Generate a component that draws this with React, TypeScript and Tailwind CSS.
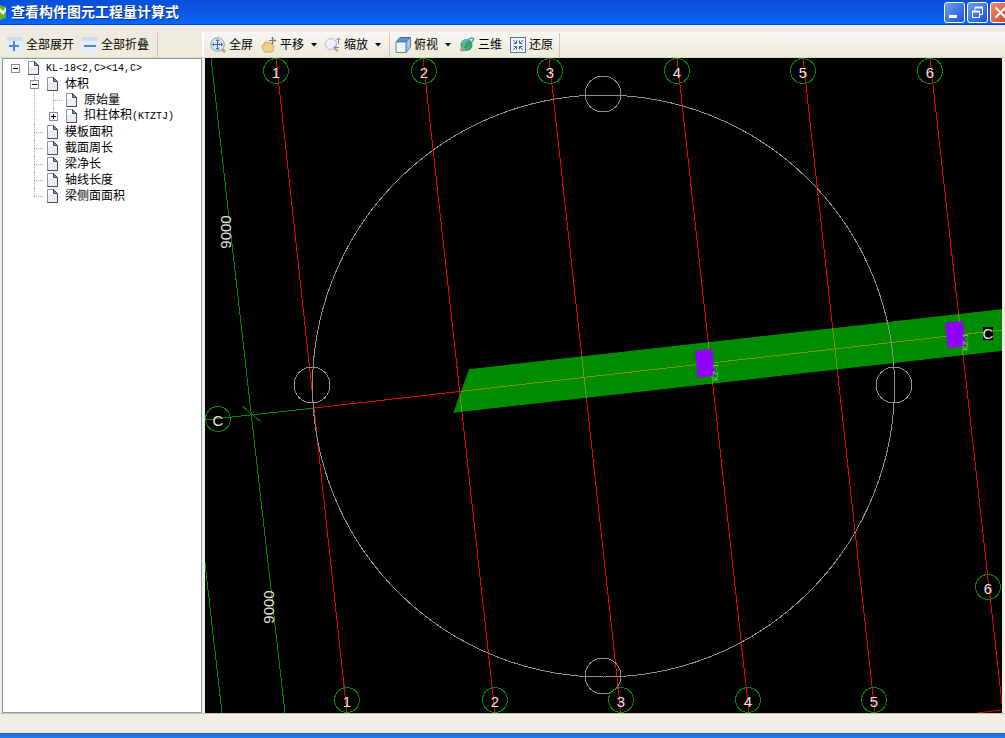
import { useState } from 'react';
import type { ReactNode } from 'react';

interface TreeNode {
  id: string;
  label: string;
  code?: string;
  children?: TreeNode[];
}

interface Point {
  x: number;
  y: number;
  label: string;
}

const TREE: TreeNode = {
  id: 'beam',
  label: '',
  code: 'KL-18<2,C><14,C>',
  children: [
    {
      id: 'volume',
      label: '体积',
      children: [
        { id: 'raw', label: '原始量' },
        { id: 'column', label: '扣柱体积', code: '(KTZTJ)', children: [] },
      ],
    },
    { id: 'formwork', label: '模板面积' },
    { id: 'perimeter', label: '截面周长' },
    { id: 'clear', label: '梁净长' },
    { id: 'axis', label: '轴线长度' },
    { id: 'side', label: '梁侧面面积' },
  ],
};

// grid axes run from the top bubble row down to the bottom one
const AXES = [
  { x1: 276, x2: 347 },
  { x1: 423, x2: 495 },
  { x1: 549, x2: 621 },
  { x1: 677, x2: 749 },
  { x1: 803, x2: 875 },
  { x1: 930, x2: 1003 },
];

const BEAM = '469,369 1002,309 1002,351 453,413';

const BUBBLES: Point[] = [
  { x: 276, y: 71, label: '1' },
  { x: 424, y: 71, label: '2' },
  { x: 550, y: 71, label: '3' },
  { x: 677, y: 71, label: '4' },
  { x: 803, y: 71, label: '5' },
  { x: 930, y: 71, label: '6' },
  { x: 347, y: 700, label: '1' },
  { x: 495, y: 700, label: '2' },
  { x: 621, y: 700, label: '3' },
  { x: 748, y: 700, label: '4' },
  { x: 874, y: 700, label: '5' },
  { x: 988, y: 587, label: '6' },
  { x: 218, y: 419, label: 'C' },
];

const HANDLES = [
  { x: 603, y: 94 },
  { x: 312, y: 385 },
  { x: 894, y: 385 },
  { x: 603, y: 676 },
];

function PageIcon() {
  return (
    <svg className="size-4 shrink-0" viewBox="0 0 16 16">
      <path d="M3.5 1.5h6l4 4v9h-10z" fill="#e9edf8" stroke="#8b95a8" />
      <path d="M4 2h5v5H4z" fill="#fff" />
      <path d="M9.500 1.500v4h4z" fill="#8793b5" stroke="#3e465c" />
      <path d="M13.500 5.500v9h-10" fill="none" stroke="#3e465c" />
    </svg>
  );
}

function PlusIcon({ minus = false }: { minus?: boolean }) {
  return (
    <svg className="size-4" viewBox="0 0 16 16">
      <rect width="16" height="16" fill="#e3edf9" />
      <rect width="16" height="4" fill="#d3daf6" />
      {minus ? (
        <path d="M2 8h12v2H2z" fill="#4b89b8" />
      ) : (
        <path d="M6 4h2v4h4v2H8v4H6v-4H2V8h4z" fill="#4b89b8" />
      )}
    </svg>
  );
}

function FullScreenIcon() {
  return (
    <svg className="size-4" viewBox="0 0 16 16">
      <path d="M12 12l3 3" stroke="#d29a63" strokeWidth="2.500" />
      <circle cx="7.500" cy="7.500" r="6.800" fill="#d6e8f8" stroke="#8a9db5" />
      <path d="M7.500 3v9M3 7.500h9" stroke="#3a6497" />
      <path
        d="M7.500 2l2 2h-4zM7.500 13l2-2h-4zM2 7.500l2-2v4zM13 7.500l-2-2v4z"
        fill="#3a6497"
      />
    </svg>
  );
}

function PanIcon() {
  return (
    <svg className="size-4" viewBox="0 0 16 16">
      <path
        d="M3 15c0-2-2-4-2-6 0-1 1-1 2 0V6c0-1 1-1 2 0 0-2 2-2 2 0 1-1 2-1 2 1 1-1 2 0 2 1l2 1c0 3-1 5-2 6z"
        fill="#f1d18a"
        stroke="#cda564"
      />
      <path d="M11.500 0v7M8 3.500h7" stroke="#6c737b" />
      <path
        d="M11.500 0l1.500 2h-3zM15.500 3.500l-2-1.500v3zM11.500 7.500l1.500-2h-3z"
        fill="#6c737b"
      />
    </svg>
  );
}

function ZoomIcon() {
  return (
    <svg className="size-4" viewBox="0 0 16 16">
      <path d="M9.500 10.500l3 4" stroke="#d7a873" strokeWidth="2.500" />
      <circle cx="6" cy="7" r="5.500" fill="#edf3fb" stroke="#b3bac8" />
      <path d="M13.500 1v6M11.500 3l2-2 2 2M9 10.500h5M11 8.500l-2 2 2 2" fill="none" stroke="#7588a0" />
    </svg>
  );
}

function CubeIcon() {
  return (
    <svg className="size-4" viewBox="0 0 16 16">
      <path d="M1 5l4-4.500h10.500L11 5z" fill="#4f9bcd" stroke="#3c6792" />
      <path d="M11 5l4.500-4.500V10L11 15.500z" fill="#a8c7e4" stroke="#6883a4" />
      <path d="M1 5h10v10.500H1z" fill="#edf3fb" stroke="#6883a4" />
    </svg>
  );
}

function OrbitIcon() {
  return (
    <svg className="size-4" viewBox="0 0 16 16">
      <circle cx="7.500" cy="8" r="6" fill="#2da65b" />
      <path d="M4 4c2-2 4-2 6-1-2 2-4 4-5 7-3-2-2-4-1-6z" fill="#67c5a6" />
      <path d="M12 6c3-3 3-5 1-5C9 1 2 9 2 13c1 2 7-1 9-5" fill="none" stroke="#5c9fc0" strokeWidth="1.500" />
      <path d="M1 14l3-5 2 3z" fill="#d89d5d" />
    </svg>
  );
}

function RestoreIcon() {
  return (
    <svg className="size-4" viewBox="0 0 16 16">
      <rect x=".5" y=".5" width="15" height="15" fill="#f1f6fd" stroke="#5276ae" />
      <path
        d="M3 3l3 3M13 3l-3 3M3 13l3-3M13 13l-3-3M6.500 3.500v3h-3M9.500 3.500v3h3M6.500 12.500v-3h-3M9.500 12.500v-3h3"
        fill="none"
        stroke="#42699f"
      />
    </svg>
  );
}

function ToolButton({ icon, label }: { icon: ReactNode; label: string }) {
  return (
    <button type="button" className="flex shrink-0 items-center gap-[3px] text-xs whitespace-nowrap text-black">
      {icon}
      {label}
    </button>
  );
}

function MenuArrow({ label }: { label: string }) {
  return (
    <button type="button" aria-label={label} className="-ml-px shrink-0">
      <svg className="h-1 w-1.5" viewBox="0 0 6 4">
        <path d="M0 0h6L3 3.500z" fill="#000" />
      </svg>
    </button>
  );
}

function Separator() {
  return <span className="h-6 w-px shrink-0 bg-[#c9c7ba]" />;
}

function TitleBar() {
  const button =
    'flex size-[21px] items-center justify-center rounded-[3px] border border-white bg-linear-to-br from-[#6d9bf5] to-[#1c4fd6]';

  return (
    <header className="flex h-[25px] shrink-0 items-center overflow-hidden border-b border-[#0a3fae] bg-linear-to-b from-[#0a50d8] via-[#0a56e6] to-[#0668fb]">
      <svg className="mr-1 h-4 w-[7px] shrink-0" viewBox="0 0 7 16">
        <path d="M0 1l6 2v11l-6 2z" fill="#62b522" />
        <path d="M0 4l3 3 3-4v4l-3 4-3-3z" fill="#effad9" />
      </svg>
      <h1 className="grow font-['Liberation_Sans','Noto_Sans_CJK_SC',sans-serif] text-sm leading-5 font-bold whitespace-nowrap text-white [text-shadow:1px_1px_#0a3387]">
        查看构件图元工程量计算式
      </h1>
      <div className="-mr-1.5 flex shrink-0 gap-0.5">
        <button type="button" aria-label="最小化" className={button}>
          <svg className="size-[19px]" viewBox="0 0 19 19">
            <path d="M4 12h8v3H4z" fill="#fff" />
          </svg>
        </button>
        <button type="button" aria-label="还原窗口" className={button}>
          <svg className="size-[19px]" viewBox="0 0 19 19" fill="none" stroke="#fff">
            <path d="M7 7V4.500h7.500v7H12" />
            <path d="M7 4.500h8" strokeWidth="2" />
            <path d="M4.500 8.500h7v6h-7z" />
            <path d="M4 8.500h8" strokeWidth="2" />
          </svg>
        </button>
        <button
          type="button"
          aria-label="关闭"
          className="flex size-[21px] items-center justify-center rounded-[3px] border border-white bg-linear-to-br from-[#f08a68] to-[#d0401c]"
        >
          <svg className="size-[19px]" viewBox="0 0 19 19">
            <path d="M4.500 4.500l10 10M14.500 4.500l-10 10" stroke="#fff" strokeWidth="2" />
          </svg>
        </button>
      </div>
    </header>
  );
}

function Toolbars() {
  return (
    <div className="flex h-[33px] shrink-0 border-b border-[#dcd8b8] bg-linear-to-b from-[#edeae4] to-[#efedd9] pt-[7px]">
      <div className="flex w-[202px] shrink-0 items-center gap-2 pl-[7px]">
        <ToolButton icon={<PlusIcon />} label="全部展开" />
        <ToolButton icon={<PlusIcon minus />} label="全部折叠" />
        <Separator />
      </div>
      <div className="flex grow items-center gap-2 border-l-2 border-white bg-linear-to-b from-[#f7f6f0] to-[#eceadb] pl-1.5">
        <ToolButton icon={<FullScreenIcon />} label="全屏" />
        <ToolButton icon={<PanIcon />} label="平移" />
        <MenuArrow label="平移选项" />
        <ToolButton icon={<ZoomIcon />} label="缩放" />
        <MenuArrow label="缩放选项" />
        <div className="flex items-center gap-[5px]">
          <Separator />
          <ToolButton icon={<CubeIcon />} label="俯视" />
        </div>
        <MenuArrow label="俯视选项" />
        <ToolButton icon={<OrbitIcon />} label="三维" />
        <div className="flex items-center gap-1.5">
          <ToolButton icon={<RestoreIcon />} label="还原" />
          <Separator />
        </div>
      </div>
    </div>
  );
}

function TreeItem({ node, root = false, last = false }: { node: TreeNode; root?: boolean; last?: boolean }) {
  const [open, setOpen] = useState(!node.children || node.children.length > 0);

  return (
    <li className="relative">
      {!root && (
        <span
          className={
            last
              ? 'absolute top-0 left-1 h-2 border-l border-dotted border-[#aaa]'
              : 'absolute top-0 bottom-0 left-1 border-l border-dotted border-[#aaa]'
          }
        />
      )}
      <div className="flex h-4 items-center">
        {node.children ? (
          <button
            type="button"
            aria-label={open ? '折叠' : '展开'}
            onClick={() => setOpen(!open)}
            className="relative mr-[5px] flex size-[9px] shrink-0 items-center justify-center border border-[#848f9c] bg-white"
          >
            <span className="absolute h-px w-[5px] bg-black" />
            {!open && <span className="absolute h-[5px] w-px bg-black" />}
          </button>
        ) : (
          <span className="mr-px ml-1 w-[9px] shrink-0 border-t border-dotted border-[#aaa]" />
        )}
        <PageIcon />
        <span className="ml-[5px] text-xs leading-4 whitespace-nowrap">
          {node.label}
          {node.code && (
            <span className="font-['Liberation_Mono',monospace] text-[10px]">{node.code}</span>
          )}
        </span>
      </div>
      {open && node.children && (
        <ul className="pl-[19px]">
          {node.children.map((child, i) => (
            <TreeItem key={child.id} node={child} last={i === node.children!.length - 1} />
          ))}
        </ul>
      )}
    </li>
  );
}

function Axes({ stroke }: { stroke: string }) {
  return (
    <g stroke={stroke} shapeRendering="crispEdges">
      {AXES.map((axis) => (
        <line key={axis.x1} x1={axis.x1} y1="58" x2={axis.x2} y2="713" />
      ))}
      <path d="M314 408L1002 330" />
    </g>
  );
}

function Drawing() {
  return (
    <svg
      className="block h-full w-full"
      viewBox="205 58 797 655"
      preserveAspectRatio="xMinYMin slice"
      fontFamily="'Liberation Sans', sans-serif"
      fill="none"
    >
      <clipPath id="beam">
        <polygon points={BEAM} />
      </clipPath>

      {/* dimension lines */}
      <g stroke="#008a00" shapeRendering="crispEdges">
        <path d="M211 58L285 713M205 563L222 713M205 420L314 408M242 406L261 422" />
      </g>

      {/* grid axes, dimmed where they cross the beam */}
      <Axes stroke="#e60000" />
      <path d="M977 713L1002 710" stroke="#e60000" />
      <g clipPath="url(#beam)">
        <polygon points={BEAM} fill="#008c00" />
        <Axes stroke="#7f9400" />
      </g>

      {/* columns */}
      <g fill="#8f00ff">
        <polygon points="695,351 712,349 715,375 698,378" />
        <polygon points="945,323 963,321 965,346 948,348" />
      </g>
      <g fill="#8fc78f" fontSize="8">
        <text transform="translate(718 381) rotate(-90)">KZ-1</text>
        <text transform="translate(968 351) rotate(-90)">KZ-1</text>
      </g>

      {/* orbit ring with its four handles */}
      <g stroke="#8f8f8f" shapeRendering="crispEdges">
        <circle cx="603.5" cy="386" r="291" />
        {HANDLES.map((h) => (
          <circle key={`${h.x}-${h.y}`} cx={h.x} cy={h.y} r="18" />
        ))}
      </g>

      {BUBBLES.map((b) => (
        <g key={`${b.x}-${b.y}`}>
          <circle cx={b.x} cy={b.y} r="12.500" stroke="#008a00" shapeRendering="crispEdges" />
          <text x={b.x} y={b.y + 7} textAnchor="middle" fontSize="15" fill="#e4e4e4">
            {b.label}
          </text>
        </g>
      ))}
      <rect x="983" y="327" width="10" height="13" fill="#000" />
      <text x="988" y="339" textAnchor="middle" fontSize="15" fill="#e4e4e4">
        C
      </text>

      <g fill="#e4e4e4" fontSize="15" textAnchor="middle">
        <text transform="translate(231 232) rotate(-90)">9000</text>
        <text transform="translate(274 607) rotate(-90)">9000</text>
      </g>
    </svg>
  );
}

export default function App() {
  return (
    <div className="flex h-screen flex-col overflow-hidden bg-[#f1eee6] font-['Liberation_Sans','Noto_Sans_CJK_SC',sans-serif] text-black">
      <TitleBar />
      <Toolbars />
      <main className="flex min-h-0 grow gap-[3px] pr-[3px] pl-0.5">
        <nav className="w-50 shrink-0 overflow-auto border border-[#7f9db9] bg-white pt-px pl-2">
          <ul>
            <TreeItem node={TREE} root />
          </ul>
        </nav>
        <section className="min-w-0 grow bg-black">
          <Drawing />
        </section>
      </main>
      <footer className="h-5 shrink-0 border-t border-[#c5c2b8] bg-[#f1eee6]" />
      <div className="h-[5px] shrink-0 border-t border-[#1a5fb8] bg-[#1f78e6]" />
    </div>
  );
}
